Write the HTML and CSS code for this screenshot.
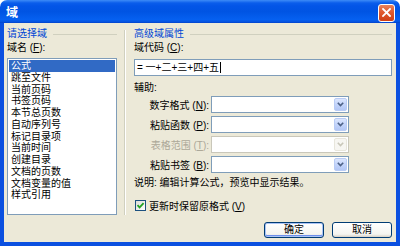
FILE: index.html
```html
<html>
    <head>
        <title>域</title>
        <meta charset="UTF-8">
        <link rel="stylesheet" href="styles.css">
    </head>
    <body>
        <div class="window">
            <div class="titlebar">
                <span class="title">域</span>
                <span class="close-btn">
                    <svg width="9" height="9" viewBox="0 0 9 9"><path d="M1 1 L8 8 M8 1 L1 8" stroke="#fff" stroke-width="1.8" stroke-linecap="square"/></svg>
                </span>
            </div>
            <div class="client">
                <div class="main">
                    <div class="left-pane">
                        <div class="group-title">请选择域</div>
                        <div class="label">域名 (<u>F</u>):</div>
                        <ul class="field-list">
                            <li class="selected">公式</li>
                            <li>跳至文件</li>
                            <li>当前页码</li>
                            <li>书签页码</li>
                            <li>本节总页数</li>
                            <li>自动序列号</li>
                            <li>标记目录项</li>
                            <li>当前时间</li>
                            <li>创建目录</li>
                            <li>文档的页数</li>
                            <li>文档变量的值</li>
                            <li>样式引用</li>
                        </ul>
                    </div>
                    <div class="separator"></div>
                    <div class="right-pane">
                        <div class="group-title">高级域属性</div>
                        <div class="label">域代码 (<u>C</u>):</div>
                        <div class="code-box">= 一+二+三+四+五<span class="caret"></span></div>
                        <div class="label aux">辅助:</div>
                        <div class="combo-rows">
                            <div class="combo-row">
                                <span class="combo-label">数字格式 (<u>N</u>):</span>
                                <div class="combo"><span class="combo-arrow"><svg width="7" height="5" viewBox="0 0 7 5"><path d="M0.8 0.8 L3.5 3.6 L6.2 0.8" fill="none" stroke="#4D6185" stroke-width="1.6"/></svg></span></div>
                            </div>
                            <div class="combo-row">
                                <span class="combo-label">粘贴函数 (<u>P</u>):</span>
                                <div class="combo"><span class="combo-arrow"><svg width="7" height="5" viewBox="0 0 7 5"><path d="M0.8 0.8 L3.5 3.6 L6.2 0.8" fill="none" stroke="#4D6185" stroke-width="1.6"/></svg></span></div>
                            </div>
                            <div class="combo-row disabled">
                                <span class="combo-label">表格范围 (<u>T</u>):</span>
                                <div class="combo"><span class="combo-arrow"><svg width="7" height="5" viewBox="0 0 7 5"><path d="M0.8 0.8 L3.5 3.6 L6.2 0.8" fill="none" stroke="#C9C7BA" stroke-width="1.6"/></svg></span></div>
                            </div>
                            <div class="combo-row">
                                <span class="combo-label">粘贴书签 (<u>B</u>):</span>
                                <div class="combo"><span class="combo-arrow"><svg width="7" height="5" viewBox="0 0 7 5"><path d="M0.8 0.8 L3.5 3.6 L6.2 0.8" fill="none" stroke="#4D6185" stroke-width="1.6"/></svg></span></div>
                            </div>
                        </div>
                        <div class="note">说明: 编辑计算公式，预览中显示结果。</div>
                        <div class="check-row">
                            <span class="checkbox"><svg width="9" height="9" viewBox="0 0 9 9"><path d="M1.5 4.2 L3.6 6.4 L7.6 2.2" fill="none" stroke="#21A121" stroke-width="1.8"/></svg></span>
                            <span>更新时保留原格式 (<u>V</u>)</span>
                        </div>
                    </div>
                </div>
                <div class="footer">
                    <button class="btn default">确定</button>
                    <button class="btn">取消</button>
                </div>
            </div>
        </div>
    </body>
</html>
```

FILE: styles.css
```css
body {
    margin: 0;
    background-color: #fff;
    font-family: "Liberation Sans", "Noto Sans CJK SC", sans-serif;
    font-size: 10px;
    color: #000;
}
.window {
    width: 400px;
    height: 246px;
    display: flex;
    flex-direction: column;
}
.titlebar {
    height: 23px;
    flex: none;
    display: flex;
    align-items: center;
    justify-content: space-between;
    padding: 0 5px 0 6px;
    border-radius: 7px 7px 0 0;
    background: linear-gradient(to bottom, #3D8BF7 0, #0A5DEB 3px, #0355E7 6px, #0054E3 50%, #0560F0 85%, #0553E0 95%, #0040C8 100%);
}
.title {
    color: white;
    font-weight: bold;
    font-size: 12px;
    margin-top: -1px;
}
.close-btn {
    width: 15px;
    height: 16px;
    margin-top: 2px;
    border: 1px solid #fff;
    border-radius: 3px;
    background: linear-gradient(to bottom, #E8835E 0%, #E05A2E 45%, #CF3F14 100%);
    display: flex;
    align-items: center;
    justify-content: center;
}
.client {
    flex: 1;
    background-color: #ECE9D8;
    border: 4px solid #0B50E0;
    border-top: none;
    padding: 5px 4px 0 3px;
    display: flex;
    flex-direction: column;
}
.main {
    display: flex;
    height: 187px;
}
.left-pane {
    width: 110px;
    display: flex;
    flex-direction: column;
}
.group-title {
    display: flex;
    align-items: center;
    height: 12px;
    line-height: 12px;
    color: #0046D5;
    white-space: nowrap;
}
.group-title::after {
    content: "";
    flex: 1;
    margin-left: 6px;
    border-top: 1px solid #D0D0BF;
}
.label {
    height: 12px;
    line-height: 12px;
    margin-top: 2px;
    white-space: nowrap;
}
.field-list {
    list-style-type: none;
    margin: 4px 0 0 0;
    padding: 1px;
    height: 155px;
    background-color: white;
    border: 1px solid #7F9DB9;
}
.field-list li {
    height: 11.75px;
    line-height: 11.75px;
    padding-left: 2px;
    white-space: nowrap;
}
.field-list li.selected {
    background-color: #316AC5;
    color: white;
}
.separator {
    width: 1px;
    height: 185px;
    margin: 2px 0 0 7px;
    background-color: #D0D0BF;
    box-shadow: 1px 0 0 #fff;
}
.right-pane {
    flex: 1;
    margin-left: 9px;
    display: flex;
    flex-direction: column;
}
.code-box {
    height: 15px;
    line-height: 15px;
    margin-top: 5px;
    padding-left: 2px;
    background-color: white;
    border: 1px solid #7F9DB9;
    white-space: nowrap;
    display: flex;
    align-items: center;
}
.caret {
    display: inline-block;
    width: 1px;
    height: 11px;
    margin-left: 1px;
    background-color: #000;
}
.label.aux {
    margin-top: 6px;
}
.combo-rows {
    display: flex;
    flex-direction: column;
    gap: 3px;
    margin-top: 2px;
}
.combo-row {
    display: flex;
    align-items: center;
    height: 17px;
}
.combo-label {
    width: 75px;
    padding-right: 2px;
    text-align: right;
    white-space: nowrap;
}
.combo {
    width: 135px;
    height: 15px;
    padding: 0 1px 0 0;
    background-color: white;
    border: 1px solid #7F9DB9;
    display: flex;
    align-items: center;
    justify-content: flex-end;
}
.combo-arrow {
    width: 13px;
    height: 13px;
    border: 1px solid #B9CCF5;
    border-radius: 2px;
    background: linear-gradient(to bottom, #DCE6FD 0%, #C3D4FB 50%, #B3C7F5 100%);
    display: flex;
    align-items: center;
    justify-content: center;
    box-sizing: border-box;
}
.combo-row.disabled .combo-label {
    color: #ACA899;
}
.combo-row.disabled .combo {
    border-color: #C9C7BA;
}
.combo-row.disabled .combo-arrow {
    border-color: #E8E6DC;
    background: #F7F6F2;
}
.note {
    height: 12px;
    line-height: 12px;
    margin-top: 4px;
    white-space: nowrap;
}
.check-row {
    display: flex;
    align-items: center;
    gap: 3px;
    height: 12px;
    margin: 10px 0 0 1px;
    white-space: nowrap;
}
.checkbox {
    width: 11px;
    height: 11px;
    box-sizing: border-box;
    border: 1px solid #1C5180;
    background: linear-gradient(135deg, #DCDCD7 0%, #FFFFFF 100%);
    display: flex;
    align-items: center;
    justify-content: center;
}
.footer {
    display: flex;
    justify-content: flex-end;
    gap: 8px;
    margin-top: 7px;
}
.btn {
    width: 60px;
    height: 16px;
    padding: 0;
    font-family: inherit;
    font-size: 10px;
    line-height: 14px;
    border: 1px solid #003C74;
    border-radius: 3px;
    background: linear-gradient(to bottom, #FFFFFF 0%, #F4F4F0 80%, #D6D0C5 100%);
    color: #000;
}
.btn.default {
    box-shadow: inset 0 0 0 1px #A9C3F5, inset 0 -1px 0 1px #6D8EEB;
}
```
